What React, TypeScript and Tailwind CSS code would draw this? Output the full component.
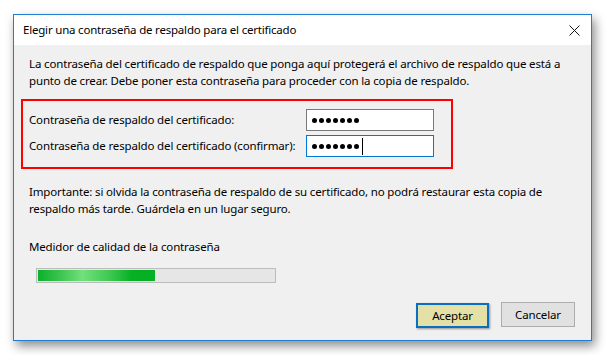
import React from 'react';

const Dots: React.FC<{ caret?: boolean }> = ({ caret }) => (
    <div className="flex items-center gap-[2px]">
        {Array.from({ length: 7 }).map((_, i) => (
            <span key={i} className="w-[5px] h-[5px] rounded-full bg-black" />
        ))}
        {caret && <span className="ml-[1px] w-px h-[17px] bg-black" />}
    </div>
);

const App: React.FC = () => {
    return (
        <div
            className="w-[606px] h-[355px] bg-white pt-[14px] pl-[13px] text-[11.5px] tracking-[-0.15px] whitespace-nowrap text-black"
            style={{ fontFamily: '"Noto Sans", sans-serif' }}
        >
            <div className="w-[579px] h-[327px] border border-[#1c7fd1] flex flex-col bg-[#f0f0f0] shadow-[3px_5px_10px_rgba(0,0,0,0.45)]">
                {/* title bar */}
                <div className="h-[30px] shrink-0 bg-white flex items-center justify-between pl-[9px] pr-[10px]">
                    <span className="tracking-[-0.2px]">Elegir una contraseña de respaldo para el certificado</span>
                    <svg width="11" height="11" viewBox="0 0 11 11" className="mr-[1px]">
                        <path d="M0.5 0.5 L10.5 10.5 M10.5 0.5 L0.5 10.5" stroke="#111" strokeWidth="1" />
                    </svg>
                </div>

                <div className="flex flex-col px-[7px]">
                    <p className="pt-[10px] pl-[8px] leading-[17px]">
                        La contraseña del certificado de respaldo que ponga aquí protegerá el archivo de respaldo que está a<br />
                        punto de crear. Debe poner esta contraseña para proceder con la copia de respaldo.
                    </p>

                    <div className="mt-[10px] w-[432px] h-[70px] border-2 border-[#ff0000] pt-[8px] pl-[6px] flex flex-col gap-[4px]">
                        <div className="flex items-center justify-between pr-[17px]">
                            <span>Contraseña de respaldo del certificado:</span>
                            <div className="w-[128px] h-[22px] bg-white border border-[#7a7a7a] flex items-center pl-[5px]">
                                <Dots />
                            </div>
                        </div>
                        <div className="flex items-center justify-between pr-[17px]">
                            <span>Contraseña de respaldo del certificado (confirmar):</span>
                            <div className="w-[128px] h-[22px] bg-white border border-[#0078d7] flex items-center pl-[5px]">
                                <Dots caret />
                            </div>
                        </div>
                    </div>

                    <p className="mt-[14px] pl-[8px] leading-[17px]">
                        Importante: si olvida la contraseña de respaldo de su certificado, no podrá restaurar esta copia de<br />
                        respaldo más tarde. Guárdela en un lugar seguro.
                    </p>

                    <p className="mt-[21px] pl-[8px] leading-[17px]">Medidor de calidad de la contraseña</p>

                    <div className="mt-[13px] ml-[15px] w-[240px] h-[15px] border border-[#bcbcbc] bg-[#e6e6e6] p-px">
                        <div className="h-full w-[117px] bg-[linear-gradient(90deg,#0cb02c_0%,#3fc552_20%,#72e07c_38%,#3dc74f_62%,#06b025_80%,#06b025_100%)]" />
                    </div>

                    <div className="mt-[19px] flex justify-end gap-[12px] pr-[9px]">
                        <button className="w-[73px] h-[25px] bg-[#e5e1a6] border-2 border-[#0a6fc2] shadow-[1px_1px_2px_rgba(0,0,0,0.4)] mt-px">
                            Aceptar
                        </button>
                        <button className="w-[74px] h-[25px] bg-[#e1e1e1] border border-[#adadad]">
                            Cancelar
                        </button>
                    </div>
                </div>
            </div>
        </div>
    );
};

export default App;
